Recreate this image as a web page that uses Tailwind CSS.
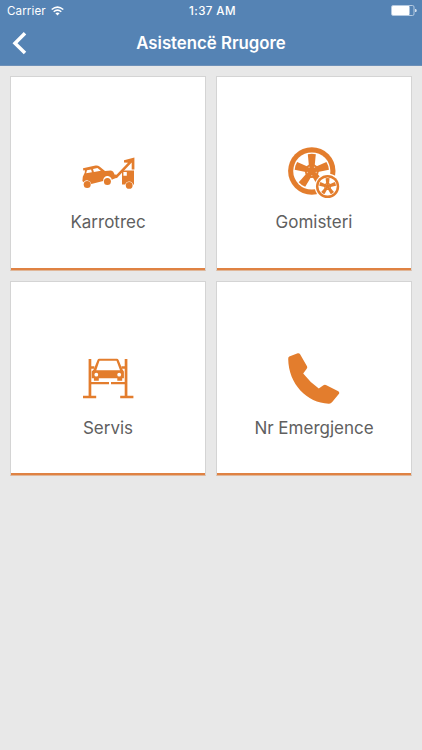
<!DOCTYPE html>
<html lang="sq">
<head>
<meta charset="utf-8">
<title>Asistencë Rrugore</title>
<script src="https://cdn.jsdelivr.net/npm/@tailwindcss/browser@4"></script>
</head>
<body class="h-[750px] overflow-hidden bg-[#e8e8e8] font-['Inter','Liberation_Sans',sans-serif]">
<header class="h-[66px] border-b border-[#6d90b8] bg-[#5583b4] text-white">
  <div class="grid h-[22px] grid-cols-3 items-center text-[11.6px] leading-[22px]">
    <div class="flex items-center gap-[5px] pl-[7px]">
      <span class="w-[39px] whitespace-nowrap tracking-[0.1px]">Carrier</span>
      <svg class="h-[10px] w-[13px]" viewBox="0 0 13 10" fill="none" stroke="white" stroke-width="1.5"><path d="M.7 3.500Q6.500-1.300 12.300 3.500M2.700 5.700Q6.500 2.500 10.300 5.700"/><path d="M4.400 7.300Q6.500 5.500 8.600 7.300L6.500 9.500Z" fill="white" stroke="none"/></svg>
    </div>
    <div class="pl-[3px] text-center font-medium tracking-[0.4px] whitespace-nowrap">1:37 AM</div>
    <div class="flex justify-end pr-[5px] pb-px">
      <svg class="h-[11px] w-[26px]" viewBox="0 0 26 11"><rect x=".5" y=".5" width="22.500" height="10" rx="1.500" fill="none" stroke="#b5cae1"/><rect x="1" y="1" width="17.500" height="9" rx=".7" fill="white"/><path d="M24 4h.7q1 0 1 1.500t-1 1.500H24Z" fill="#d5e1ee"/></svg>
    </div>
  </div>
  <div class="grid h-[42px] grid-cols-[60px_1fr_60px] items-center">
    <svg class="ml-[12px] h-[24px] w-[16px]" viewBox="0 0 16 24" fill="none" stroke="white" stroke-width="3.500"><path d="M13 2.300 3 12.200 13 22"/></svg>
    <h1 class="text-center text-[16.8px] leading-[22px] font-semibold whitespace-nowrap">Asistencë Rrugore</h1>
  </div>
</header>
<main class="grid grid-cols-2 gap-[10px] px-[10px] pt-[10px] text-[17px] leading-[22px] text-[#606060]">
  <section class="flex h-[195px] flex-col items-center border border-[#d4d4d4] border-b-[#e0b799] bg-white pt-[65px] shadow-[inset_0_-2px_0_#df8243]">
    <svg class="h-[62px] w-[64px]" viewBox="0 -8 64 62" fill="#e37d2d">
      <path fill-rule="evenodd" d="M7 18.300 19.500 15.600q2.300-.4 4 .9l5.500 4.400 6-.3q2.500.3 3.200 3l.4 5-2.800 1.200a4.300 4.300 0 0 0-8.600 1.100L15.300 33.900a4.300 4.300 0 0 0-7.800-1.600l-1.100-1.200.4-4.300 2-4.300.1-2.200-1.600.3ZM11 20.200 10.200 23.200l5.700-.9-.8-2.900ZM17 19l.9 3 7-1.200-3.500-2.800Z"/>
      <circle cx="11.200" cy="34.600" r="3.500"/><circle cx="31.400" cy="31.600" r="3.500"/>
      <path d="m37.300 24.300 3.200.5L52 12.700l-4-.3V10.300L58.400 7.500V19.500h-2.700V12.600L54.300 14 41 28.100l-3.200.4Z"/>
      <path fill-rule="evenodd" d="M46 20.600h12v14h-.9a4 4 0 0 0-7.800 0H46ZM47.400 22v3.800h3.400V22Z"/>
      <circle cx="53.200" cy="35.400" r="3.400"/>
    </svg>
    <div class="mt-[7px]">Karrotrec</div>
  </section>
  <section class="flex h-[195px] flex-col items-center border border-[#d4d4d4] border-b-[#e0b799] bg-white pt-[65px] shadow-[inset_0_-2px_0_#df8243]">
    <svg class="h-[62px] w-[64px]" viewBox="0 0 64 62">
      <defs>
        <g id="wheel">
          <circle r="23.700" fill="#e37d2d"/><circle r="18.600" fill="white"/>
          <g fill="#e37d2d">
            <path id="spoke" d="M-4-16.700Q0-17.600 4-16.700L2.900-5.500 0-2-2.900-5.500Z"/>
            <use href="#spoke" transform="rotate(72)"/><use href="#spoke" transform="rotate(144)"/><use href="#spoke" transform="rotate(216)"/><use href="#spoke" transform="rotate(288)"/>
            <circle r="7"/>
          </g>
          <g fill="white" fill-opacity=".5">
            <circle id="bolt" cy="-4.600" r=".7" transform="rotate(36)"/>
            <use href="#bolt" transform="rotate(72)"/><use href="#bolt" transform="rotate(144)"/><use href="#bolt" transform="rotate(216)"/><use href="#bolt" transform="rotate(288)"/>
          </g>
        </g>
      </defs>
      <use href="#wheel" transform="translate(29.800 29)"/>
      <circle cx="45.600" cy="44.500" r="12.900" fill="white"/>
      <use href="#wheel" transform="translate(45.600 44.500) scale(.49)"/>
    </svg>
    <div class="mt-[7px]">Gomisteri</div>
  </section>
  <section class="flex h-[195px] flex-col items-center border border-[#d4d4d4] border-b-[#e0b799] bg-white pt-[65px] shadow-[inset_0_-2px_0_#df8243]">
    <svg class="h-[62px] w-[64px]" viewBox="0 -3 64 62" fill="#e37d2d">
      <path d="M12.600 9h2.700v36.700h4.900v2.500H7v-2.500h5.600ZM48.700 9h2.700v36.700h6v2.500H44.200v-2.500h4.500Z"/>
      <path d="M15 16.200h3.400v2.600H15ZM45.500 16.200H49v2.600h-3.500ZM15 32h18v2.200H15ZM35 32h14v2.200H35Z"/>
      <path fill-rule="evenodd" d="M17.700 19.500 21.500 10q.5-1.200 1.700-1.200h17.700q1.200 0 1.700 1.200l3.900 9.500 1.400 2v6.700h-1.700v2.600h-4.900v-2.600H22.800v2.600h-4.900v-2.600h-2.200v-6.700ZM20.300 20.200h23.700L40.500 10.800H23.500Z"/>
      <circle cx="20.300" cy="24.700" r="1.900" fill="white"/><circle cx="43.200" cy="24.700" r="1.900" fill="white"/>
    </svg>
    <div class="mt-[8px]">Servis</div>
  </section>
  <section class="flex h-[195px] flex-col items-center border border-[#d4d4d4] border-b-[#e0b799] bg-white pt-[65px] shadow-[inset_0_-2px_0_#df8243]">
    <svg class="h-[62px] w-[64px]" viewBox="0 -1 64 62" fill="#e37d2d">
      <path d="m7.300 8.600 8.400-3.300q1.600-.4 2.400 1L25 18.300q.7 1.400-.3 2.400l-3.500 4.700Q27.800 34 36.800 40.400l4.600-3.100q1.200-.8 2.500-.2L56.300 43.200q1.300.8.900 2.200l-7 8.700q-1.500 1.800-3.500 1.600C25 55 6.500 36 6.200 11Q6.200 9 7.300 8.600Z"/>
    </svg>
    <div class="mt-[8px]">Nr Emergjence</div>
  </section>
</main>
</body>
</html>
